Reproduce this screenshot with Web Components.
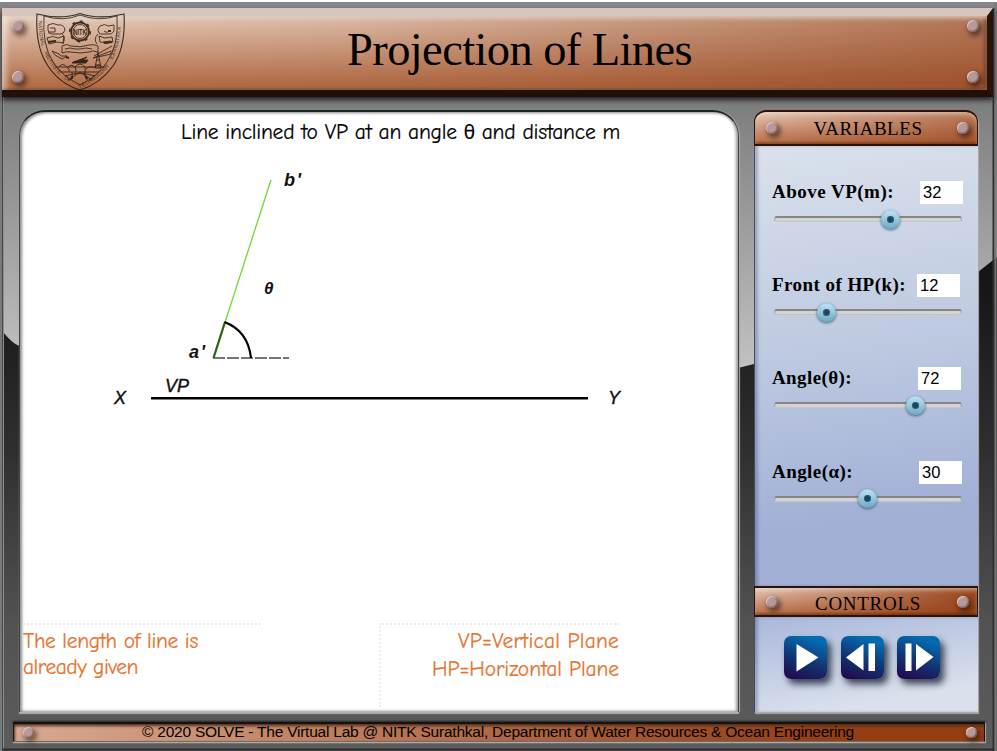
<!DOCTYPE html>
<html lang="en"><head><meta charset="utf-8"><title>Projection of Lines</title>
<style>html,body{margin:0;width:997px;height:751px;overflow:hidden;background:#fff}</style></head>
<body><lab-app></lab-app>
<script>
const define=(name,html,setup)=>customElements.define(name,class extends HTMLElement{
  connectedCallback(){
    if(this.shadowRoot)return;
    this.attachShadow({mode:'open'}).innerHTML=html;
    if(setup)setup(this,this.shadowRoot);
  }
});

// Single line of text whose letter spacing is adjusted to fill the given width.
define('fit-text',`<style>:host{display:block;white-space:nowrap}span{display:inline-block}</style><span><slot></slot></span>`,(h,r)=>{
  const w=+h.getAttribute('width'),s=r.querySelector('span'),n=h.textContent.length;
  h.style.width=w+'px';
  s.style.letterSpacing=((w-s.getBoundingClientRect().width)/n)+'px';
});

define('metal-rivet',`<style>:host{display:block;flex:none;width:12px;height:12px;border-radius:50%;
background:radial-gradient(circle at 50% 50%,#b69998 0 42%,#a88785 60%,#8c6b67 100%);
box-shadow:inset 1px 1px 1px #dcc9c9,inset -1px -1px 1px #7a5b57,2px 3px 5px 1px rgba(30,12,5,.55)}</style>`);

define('nitk-crest',`<style>:host{display:block;width:90px;height:80px}svg{display:block;opacity:.86}</style>
<svg width="90" height="80" viewBox="36 12 90 80" fill="none" stroke="#24160f" stroke-width=".9">
<path d="M37 14Q61 20 80 13.500Q99 20 124 14Q126 47 113 66Q100 84 80 90Q60 84 48 66Q35 47 37 14Z" stroke-width="1.100"/>
<path d="M44 16Q63 22 80 15Q98 22 117 16Q119 45 107 62Q98 76 80 85Q62 76 53 62Q42 45 44 16Z"/>
<path id="rim" d="M38.500 20Q38 46 51 65Q62 80 80 88Q98 80 110 65Q121 46 121 20" stroke="none"/>
<g font-family="Liberation Sans" font-size="5" fill="#24160f" stroke="none">
<text><textPath href="#rim" startOffset="1" textLength="26">NATIONAL</textPath></text>
<text><textPath href="#rim" startOffset="33" textLength="27">INSTITUTE</textPath></text>
<text><textPath href="#rim" startOffset="66" textLength="7">OF</textPath></text>
<text><textPath href="#rim" startOffset="84" textLength="38">TECHNOLOGY</textPath></text>
<text><textPath href="#rim" startOffset="129" textLength="34">KARNATAKA</textPath></text></g>
<circle cx="80" cy="31.500" r="9" stroke-width="1.800"/><circle cx="80" cy="31.500" r="10.300" stroke-dasharray="3 5" stroke-width="1.500"/>
<circle cx="80" cy="31.500" r="7"/><text x="73.500" y="35" font-family="Liberation Sans" font-size="9" textLength="13" lengthAdjust="spacingAndGlyphs" fill="#1c100b" stroke="none" font-weight="bold">NITK</text>
<path d="M48 25q5-3 10 0q6-1 7 5q-1 4-5 4h-8q-4 0-4-4zM47 38q6-3 11 0l6-2-1 7-6-1-8 2zM48 32h7v-4h-5M48 42l8-1"/>
<path d="M100 26q5-3 8 0l6-1v6q-2 4-6 3h-8q-4-4 0-8zM99 36l6 2 7-1 1 5-7 1-6-1zM104 31q4 3 5-1M103 42l8-1"/>
<path d="M48 42l8-1M104 43l8-1M108 31h3" stroke-width="2.200"/>
<path d="M62 46q5-3 9 0q9 2 18-1q5-1 9 1v6q-5-2-9 0q-9 2-18 0q-4-1-9 1zM65 49l5-1 5 1 5 0 6-1 6 1M62 34q4 3 1 10M98 34q-5 5-1 10"/>
<path d="M52 51l7 3 2 2 6 0-5 3-7-4zM94 56l18-10M93 58l18-7v3zM98 52l-3 16h6zM96 60h4M95 65h5"/>
<path d="M73 62l6-2 8-3-4 3h5l-2 3h-14z" fill="#21130d"/>
<path d="M55 67h51M59 67q3-5 8 0q3 2 2 5M67 68q4-5 8-1q2 3 0 7M75 67q5-6 10 0q1 4-1 8M86 69q4-4 8-1M94 67q5-4 8 0M61 72h38M65 76q15-5 30 0M72 72q1 5-1 8M85 72q-1 4 2 8M68 80l12-8 12 8"/>
<path d="M72 76v3M86 76l1 3M66 57l3 1" stroke-width="2.200"/>
</svg>`);

define('lab-header',`<style>
:host{box-sizing:border-box;display:grid;grid-template-columns:46px 90px 1fr 41px;height:89px;margin:0 4px 0 2px;
border-style:solid;border-width:8px 6px 7px 0;border-color:#d8c6bc #2a1307 #211007 #000;
background:linear-gradient(90deg,rgba(145,63,24,0) 0,rgba(145,63,24,.12) 35%,rgba(145,63,24,.6) 100%),linear-gradient(#e6cdbc,#af6740);
background-origin:padding-box;box-shadow:0 3px 5px #222,inset 5px 0 5px rgba(255,255,255,.38),inset 0 3px 5px -1px rgba(235,220,210,.7),inset 0 -2px 2px rgba(50,20,5,.4),inset -3px 0 3px rgba(50,20,5,.45);}
.r{display:flex;flex-direction:column;justify-content:space-between;padding:4px 0 0 10px;height:63px}
nitk-crest{margin:-4px 0 0 -12px}.r:last-child{padding-left:21px}
.t{font:46.500px/56px "Liberation Serif",serif;color:#000;padding:6px 0 0 209px}
</style><div class="r"><metal-rivet></metal-rivet><metal-rivet></metal-rivet></div><nitk-crest></nitk-crest>
<div class="t"><fit-text width="345">Projection of Lines</fit-text></div>
<div class="r"><metal-rivet></metal-rivet><metal-rivet></metal-rivet></div>`);

define('frame-backdrop',`<style>:host{position:absolute;inset:0;z-index:-1}svg{display:block}</style>
<svg width="997" height="751"><defs>
<linearGradient id="g" x2="0" y1="97" y2="370" gradientUnits="userSpaceOnUse"><stop stop-color="#7c7c7c"/><stop offset="1" stop-color="#c2c2c2"/></linearGradient>
<linearGradient id="d" x2="0" y1="260" y2="751" gradientUnits="userSpaceOnUse"><stop stop-color="#131313"/><stop offset=".4" stop-color="#303030"/><stop offset=".75" stop-color="#535353"/><stop offset="1" stop-color="#5c5c5c"/></linearGradient></defs>
<rect width="997" height="751" fill="url(#g)"/><rect width="997" height="2" fill="#fff"/><rect y="2" width="997" height="6" fill="#85878a"/>
<path d="M0 328Q12 344 20 346L738 368L754 364L978 272L997 257V751H0Z" fill="url(#d)"/>
<path d="M0 97H2V751H0Z" fill="#777b7b"/><path d="M2.500 97V751" stroke="#454848"/><path d="M3.500 97V748" stroke="#8c8f8f"/>
<path d="M993.500 8V751" stroke="#303030" stroke-width="2"/><path d="M995.500 3V751" stroke="#777" stroke-width="2"/>
<path d="M3 749.500H994" stroke="#2c2c2c" stroke-width="2"/>
</svg>`);

define('line-diagram',`<style>:host{display:block;height:480px}svg{display:block}</style>
<svg width="718" height="480" viewBox="20 142 718 480" fill="none" stroke="#000">
<path d="M213 358H289" stroke="#777" stroke-width="2" stroke-dasharray="12 2"/>
<path d="M213.500 358L271 180" stroke="#77d52c" stroke-width="1.300"/>
<path d="M213.500 358L225 322" stroke="#306012" stroke-width="2.200"/>
<path d="M224.500 322Q248 331 251 358" stroke-width="2.200"/>
<path d="M151 398.200H588" stroke-width="2.600"/>
<g font-family="Liberation Sans, sans-serif" font-style="italic" font-size="18" fill="#111" stroke="none">
<text x="284" y="186" font-weight="bold" textLength="17">b'</text><text x="189" y="358" font-weight="bold" textLength="16">a'</text><text x="264" y="294" font-weight="bold" font-size="17">θ</text>
<g stroke="#111" stroke-width=".4"><text x="165" y="391.500" textLength="24">VP</text><text x="114" y="404">X</text><text x="608" y="404">Y</text></g></g>
</svg>`);

define('drawing-panel',`<style>
:host{box-sizing:border-box;display:block;width:720px;height:602px;background:#fff;border:1px solid #444;border-top:2px solid #222;border-bottom:0;border-radius:26px 26px 0 0;
box-shadow:inset 2px 1px 3px #8a8a8a,inset -2px -1px 3px #999,0 2px 1px #b0b0b0,1px 0 1px #aaa;font-family:"Comic Sans MS","Comic Neue","Noto Sans",sans-serif;font-size:21.500px;-webkit-text-stroke:.2px currentColor}
.h{height:30px;padding:6px 0 0 161px;box-sizing:border-box;line-height:28px;color:#000}.h i{font:19px/1 "Noto Sans",sans-serif}
.n{display:flex;color:#e6732f;margin-top:1px}.a{width:237px;margin:0 118px 0 4px;border-top:2px dotted #f2e9ed;line-height:26px;padding-top:3px}
.a fit-text{margin-left:-1px}
.b{width:238px;border-left:2px dotted #f2e9ed;border-top:2px dotted #f2e9ed;line-height:28px;padding-top:2px;display:flex;flex-direction:column;align-items:flex-end;box-sizing:content-box;height:80px}
</style><div class="h"><fit-text width="439">Line inclined to VP at an angle <i>θ</i> and distance m</fit-text></div>
<line-diagram></line-diagram>
<div class="n"><div class="a"><fit-text width="175">The length of line is</fit-text><fit-text width="115">already given</fit-text></div>
<div class="b"><fit-text width="161">VP=Vertical Plane</fit-text><fit-text width="187">HP=Horizontal Plane</fit-text></div></div>`);

define('copper-bar',`<style>:host{box-sizing:border-box;display:flex;align-items:center;justify-content:space-between;padding:1px 8px 0 11px;border:solid #2b130a;border-width:2px 1px;
background:linear-gradient(90deg,rgba(145,58,15,0),rgba(145,58,15,.9)),linear-gradient(#e6c9b8,#b66c44);background-origin:padding-box;font:19px/24px "Liberation Serif",serif;color:#000;
box-shadow:inset 0 3px 4px -1px rgba(240,220,210,.6),inset 0 -2px 2px rgba(60,20,0,.35)}
:host([kind=top]){border-radius:12px 12px 0 0;background:linear-gradient(90deg,rgba(145,58,15,0),rgba(145,58,15,.55)),linear-gradient(#e6c9b8,#b66c44)}
:host([kind=top]) metal-rivet{margin-top:-2px}
::slotted(fit-text){margin-left:1px}:host(:not([kind=top])) ::slotted(fit-text){padding-top:3px}
</style><metal-rivet></metal-rivet><slot></slot><metal-rivet></metal-rivet>`);

define('value-slider',`<style>:host{display:block;height:93.200px}
.l{display:flex;height:23px;align-items:center}.l fit-text{font:bold 19px/23px "Liberation Serif",serif;color:#000;margin-top:-2px}
.v{box-sizing:border-box;width:43px;height:23px;background:#fff;padding-left:3px;font:16.500px/23px "Liberation Sans",sans-serif;color:#000}
.t{display:flex;align-items:center;box-sizing:border-box;width:188px;height:6px;margin:12px 0 0 2px;border-radius:3px;background:#d4d4d4;border:1px solid #aaa;border-top:2px solid #858585;border-bottom-color:#c4c4c4}
.k{flex:none;width:19px;height:19px;margin-top:-1px;border-radius:50%;background:radial-gradient(circle,#17465e 0 2px,#456f83 3.500px,transparent 4px),linear-gradient(#c0e4f5,#6da8c5);box-shadow:0 1px 3px #395b70,inset 0 0 1px #5090ad}
</style><div class="l"><fit-text></fit-text><div class="v"></div></div><div class="t"><div class="k"></div></div>`,(h,r)=>{
  const d=h.dataset,f=r.querySelector('fit-text'),f2=document.createElement('fit-text');
  f2.textContent=d.label;f2.setAttribute('width',d.width);f.replaceWith(f2);
  r.querySelector('.v').textContent=d.value;r.querySelector('.v').style.marginLeft=d.gap+'px';
  r.querySelector('.k').style.marginLeft=d.pos+'px';
});

define('media-button',`<style>:host{display:block;width:43px;height:43px;border-radius:7px;background:linear-gradient(20deg,#250448 0,#12326f 42%,#046bb0 85%);box-shadow:4px 5px 7px rgba(10,18,35,.75)}svg{display:block}</style>
<svg width="43" height="43" fill="#fff"></svg>`,(h,r)=>{
  r.querySelector('svg').innerHTML={play:'<path d="M12.500 8L34.500 21.500 12.500 35.500z"/>',
  back:'<path d="M5 21.500L22.500 8V34.500zM27.500 7.500h6.500v27.500h-6.500z"/>',next:'<path d="M8.500 7.500h6v27.500h-6zM19 8L36.500 21 19 34.500z"/>'}[h.dataset.kind];
});

define('side-panel',`<style>:host{box-sizing:border-box;display:block;width:224px;height:602px;box-shadow:1px 2px 1px #aaa;border-radius:12px 12px 0 0}
.top{height:36px}.mid{height:31px}
.s{box-sizing:border-box;height:440px;padding:35px 0 0 17px;border-left:1px solid #454c60;background:linear-gradient(172deg,#dae1ec,#bcc8e0 48%,#a2b0d6 82%);box-shadow:inset 3px 0 3px rgba(50,60,90,.3)}
.c{box-sizing:border-box;height:95px;padding:19px 0 0 29px;border-left:1px solid #454c60;display:flex;gap:13.500px;background:linear-gradient(170deg,#a9b7da,#dae1ed 80%);box-shadow:inset 3px 0 3px rgba(50,60,90,.3)}
</style><copper-bar class="top" kind="top"><fit-text width="109">VARIABLES</fit-text></copper-bar>
<div class="s"><value-slider data-label="Above VP(m):" data-width="122" data-value="32" data-gap="26" data-pos="106"></value-slider>
<value-slider data-label="Front of HP(k):" data-width="134" data-value="12" data-gap="11" data-pos="42"></value-slider>
<value-slider data-label="Angle(θ):" data-width="80" data-value="72" data-gap="66" data-pos="131"></value-slider>
<value-slider data-label="Angle(α):" data-width="81" data-value="30" data-gap="66" data-pos="83"></value-slider></div>
<copper-bar class="mid"><fit-text width="106">CONTROLS</fit-text></copper-bar>
<div class="c"><media-button data-kind="play"></media-button><media-button data-kind="back"></media-button><media-button data-kind="next"></media-button></div>`);

define('lab-footer',`<style>:host{box-sizing:border-box;display:flex;align-items:center;height:20px;width:972px;margin:10px 0 0 13px;padding:0 7px 0 9px;border:1px solid #241009;border-top:2px solid #17100d;border-bottom:1px solid #786960;
background:linear-gradient(90deg,#d7aa92,#c18565 28%,#a95f38 58%,#943e12 84%);box-shadow:0 1px 1px #aaa,1px 1px 1px #999,inset 1px 2px 3px #50301f,0 -1px 2px #222}
fit-text{font:15.500px/18px "Liberation Sans",sans-serif;color:#000;margin:-2px 112px 0 108px}metal-rivet{width:11px;height:11px}</style>
<metal-rivet></metal-rivet><fit-text width="712">© 2020 SOLVE - The Virtual Lab @ NITK Surathkal, Department of Water Resources &amp; Ocean Engineering</fit-text><metal-rivet></metal-rivet>`);

define('lab-app',`<style>:host{display:block;position:relative;isolation:isolate;box-sizing:border-box;width:997px;height:751px;padding-top:8px}
main{display:flex;gap:15px;padding:13px 0 0 19px}</style>
<frame-backdrop></frame-backdrop><lab-header></lab-header><main><drawing-panel></drawing-panel><side-panel></side-panel></main><lab-footer></lab-footer>`);
</script></body></html>
